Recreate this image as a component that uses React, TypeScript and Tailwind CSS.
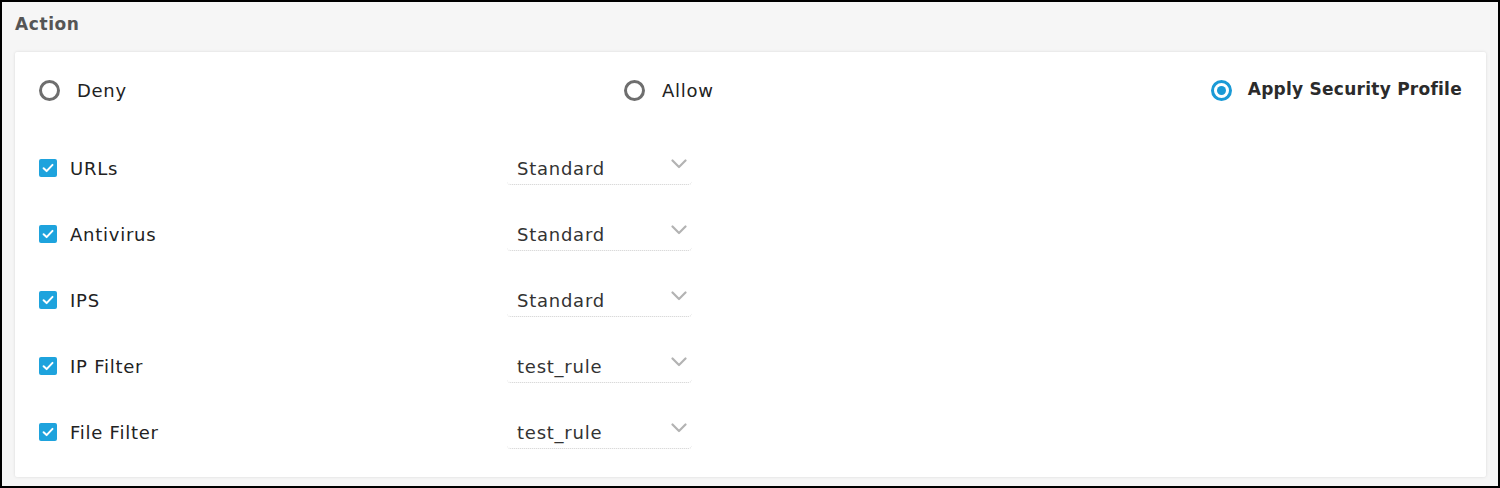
import React from 'react';

const font = { fontFamily: '"DejaVu Sans", "Noto Sans", sans-serif' };

const rules = [
  { label: 'URLs', value: 'Standard' },
  { label: 'Antivirus', value: 'Standard' },
  { label: 'IPS', value: 'Standard' },
  { label: 'IP Filter', value: 'test_rule' },
  { label: 'File Filter', value: 'test_rule' },
];

const Radio: React.FC<{ label: string; checked?: boolean }> = ({ label, checked }) => (
  <label className="flex items-center">
    {checked ? (
      <span className="w-[21px] h-[21px] rounded-full border-[3px] border-[#1a9ad6] flex items-center justify-center">
        <span className="w-[9px] h-[9px] rounded-full bg-[#1a9ad6]" />
      </span>
    ) : (
      <span className="w-[21px] h-[21px] rounded-full border-[3px] border-[#6e6e6e]" />
    )}
    <span
      className={
        checked
          ? 'ml-[16px] text-[17px] font-bold text-[#2b2b2b] tracking-[0.25px]'
          : 'ml-[17px] text-[18px] text-[#222] tracking-[0.7px]'
      }
    >
      {label}
    </span>
  </label>
);

const Checkbox: React.FC = () => (
  <span className="w-[18px] h-[18px] rounded-[2px] bg-[#1ea3dd] flex items-center justify-center">
    <svg width="14" height="14" viewBox="0 0 14 14" fill="none">
      <path d="M2.6 7.3 L5.6 10.1 L11.5 3.9" stroke="#fff" strokeWidth="2" strokeLinecap="round" strokeLinejoin="round" />
    </svg>
  </span>
);

const Chevron: React.FC = () => (
  <svg width="16" height="10" viewBox="0 0 16 10" fill="none">
    <path d="M1.5 1.5 L8 8 L14.5 1.5" stroke="#b3b3b3" strokeWidth="2.2" strokeLinecap="round" strokeLinejoin="round" />
  </svg>
);

export default function App() {
  return (
    <div
      className="w-[1500px] h-[488px] border-2 border-black bg-[#f6f6f6] pl-[13px] pr-[12px] pb-[9px] flex flex-col"
      style={font}
    >
      <div className="h-[50px] flex items-center pb-[4px]">
        <span className="text-[17px] font-bold text-[#555] tracking-[0.6px]">Action</span>
      </div>

      <div className="flex-1 bg-white rounded-[2px] shadow-[0_0_3px_rgba(0,0,0,0.12)] pl-[24px] pr-[24px] pt-[24px]">
        {/* action choices */}
        <div className="h-[28px] flex items-center justify-between">
          <Radio label="Deny" />
          <Radio label="Allow" />
          <Radio label="Apply Security Profile" checked />
        </div>

        {/* security profiles */}
        <div className="mt-[47px] flex flex-col gap-[32px]">
          {rules.map((r) => (
            <div key={r.label} className="h-[34px] flex items-center">
              <div className="w-[468px] flex items-center">
                <Checkbox />
                <span className="ml-[13px] text-[18px] text-[#222] tracking-[0.75px]">{r.label}</span>
              </div>
              <div className="w-[185px] h-[34px] flex items-center justify-between pl-[10px] pr-[5px] border-b border-dotted border-[#cfcfcf] rounded-[4px]">
                <span className="text-[18px] text-[#333] tracking-[0.75px] pt-[2px]">{r.value}</span>
                <span className="-mt-[8px]">
                  <Chevron />
                </span>
              </div>
            </div>
          ))}
        </div>
      </div>
    </div>
  );
}
